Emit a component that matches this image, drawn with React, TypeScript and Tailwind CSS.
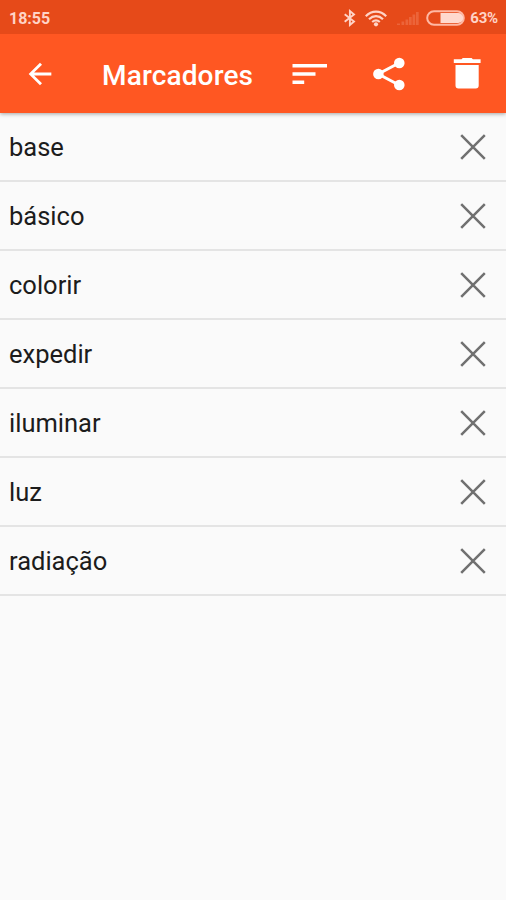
import React, { useState } from 'react'

const initialBookmarks = ['base', 'básico', 'colorir', 'expedir', 'iluminar', 'luz', 'radiação']

function StatusBar() {
    return (
        <div className="flex h-[34px] items-center bg-[#e64a19] pl-[9px] pr-2 pt-[2px] text-[#ffd3c6]">
            <span className="mt-px text-[16px] font-bold leading-none">18:55</span>
            <div className="ml-auto flex items-center">
                {/* Bluetooth */}
                <svg className="mr-[9px] h-[18px] w-[13px]" viewBox="0 0 13 18" fill="none" stroke="currentColor" strokeWidth="1.9">
                    <path d="M1.7 5.2 11 12.6 6.9 16V2L11 5.4 1.7 12.8" />
                </svg>
                {/* Wifi */}
                <svg className="mr-[10px] h-[17px] w-[22px]" viewBox="0 0 22 17" fill="none" stroke="currentColor" strokeWidth="2.2">
                    <path d="M.8 6.2C6.6.1 15.4.1 21.2 6.2M4 9.2c4.2-4 9.8-4 14 0M7.2 12c2.4-2.1 5.2-2.1 7.6 0" />
                    <circle cx="11" cy="14.3" r="2.1" fill="currentColor" stroke="none" />
                </svg>
                {/* No signal */}
                <svg className="mr-[7px] h-[15px] w-[22px]" viewBox="0 0 22 15" fill="#f07a54">
                    <path d="M0 12.5h3V14H0zM4.5 10.5h2.7V14H4.5zM8.5 8.5h2.7V14H8.5zM12 6h2.7v8H12zM15.5 3.5h2.7V14h-2.7zM19 1h2.7v13H19z" opacity=".55" />
                </svg>
                {/* Battery */}
                <svg className="mr-[5px] h-4 w-[39px]" viewBox="0 0 39 16" fill="none">
                    <rect x="1.2" y="1.2" width="36.6" height="13.6" rx="6.8" stroke="#ffb8a3" strokeWidth="2" />
                    <path d="M14.5 3h17.7a5 5 0 0 1 0 10H14.5z" fill="#ffd9ce" />
                </svg>
                <span className="mt-px text-[15px] font-bold leading-none tracking-[-0.2px]">63%</span>
            </div>
        </div>
    )
}

export default function App() {
    const [bookmarks, setBookmarks] = useState(initialBookmarks)
    const [descending, setDescending] = useState(false)

    const items = descending ? [...bookmarks].reverse() : bookmarks

    return (
        <div className="flex min-h-screen w-full flex-col bg-[#fafafa] font-['Roboto',sans-serif]">
            <header className="z-10 shadow-[0_1px_4px_rgba(0,0,0,0.35)]">
                <StatusBar />
                <div className="flex h-[78.5px] items-center bg-[#ff5722] pt-px text-white">
                    <button aria-label="Voltar" className="ml-[23px]">
                        <svg className="h-[34px] w-[34px]" viewBox="0 0 24 24" fill="currentColor">
                            <path d="M20 11H7.83l5.59-5.59L12 4l-8 8 8 8 1.41-1.41L7.83 13H20v-2z" />
                        </svg>
                    </button>
                    <h1 className="ml-[45px] mt-[4px] w-[189px] text-[28px] font-medium leading-none tracking-[0.15px]">Marcadores</h1>

                    <button aria-label="Ordenar" onClick={() => setDescending(!descending)}>
                        <svg className="h-[22px] w-[36px]" viewBox="0 0 36 22" fill="currentColor">
                            <path d="M1.5 1h35v3.5h-35zM1.5 9.3h23v3.5h-23zM1.5 17.5h11.7V21H1.5z" />
                        </svg>
                    </button>
                    <button aria-label="Compartilhar" className="ml-[46px]">
                        <svg className="h-[34px] w-[32px]" viewBox="0 0 32 34" fill="currentColor">
                            <path d="M26 6 5.3 17 26 28" fill="none" stroke="currentColor" strokeWidth="3" />
                            <circle cx="26.3" cy="6" r="5.3" />
                            <circle cx="5.4" cy="17" r="5.3" />
                            <circle cx="26.3" cy="28" r="5.3" />
                        </svg>
                    </button>
                    <button aria-label="Excluir tudo" className="ml-[48px]" onClick={() => setBookmarks([])}>
                        <svg className="h-[31px] w-[28px]" viewBox="0 0 28 31" fill="currentColor">
                            <path d="M8.5 1.3 9.8 0h8.8l1.3 1.3H27.6V5H.8V1.3zM2.5 7h23.2v20.5a3 3 0 0 1-3 3H5.5a3 3 0 0 1-3-3z" />
                        </svg>
                    </button>
                </div>
            </header>

            <ul>
                {items.map((word) => (
                    <li key={word} className="flex h-[69px] items-center justify-between border-b-2 border-[#e4e4e4] pl-[9px] pr-5">
                        <span className="mt-[4px] text-[25.5px] leading-none text-[#1c1c1c]">{word}</span>
                        <button aria-label={`Remover ${word}`} className="mt-px" onClick={() => setBookmarks(bookmarks.filter((b) => b !== word))}>
                            <svg className="h-[26px] w-[26px]" viewBox="0 0 26 26" fill="none" stroke="#707070" strokeWidth="2.5">
                                <path d="M1.2 1.2 24.8 24.8M24.8 1.2 1.2 24.8" />
                            </svg>
                        </button>
                    </li>
                ))}
            </ul>
        </div>
    )
}
